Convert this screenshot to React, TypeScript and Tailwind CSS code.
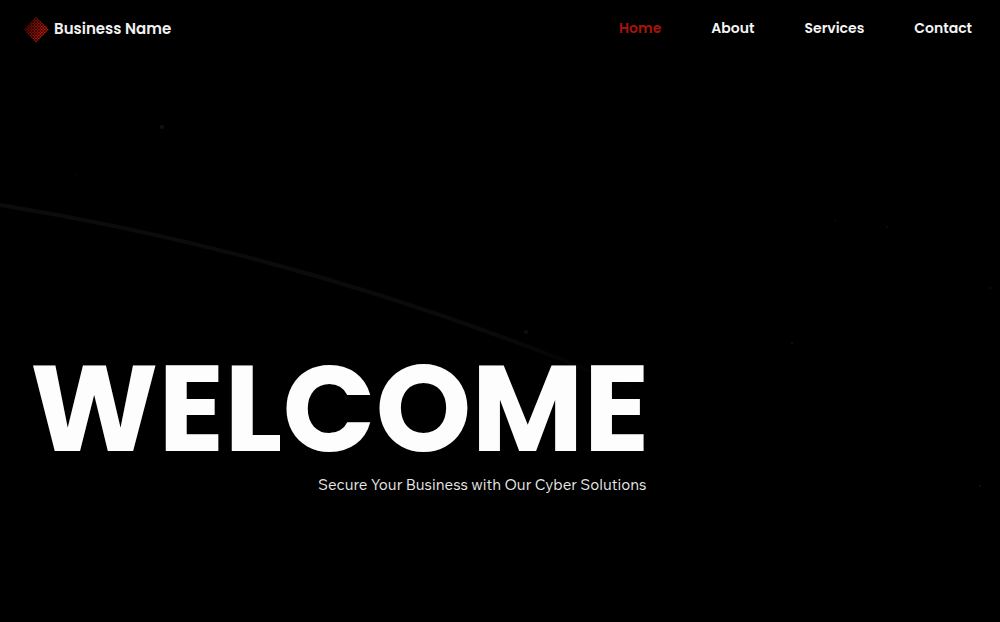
const links = ["Home", "About", "Services", "Contact"];

const stars = [
  { x: 162, y: 127, r: 2, o: 0.08 },
  { x: 526, y: 332, r: 2, o: 0.06 },
  { x: 76, y: 174, r: 1, o: 0.04 },
  { x: 835, y: 221, r: 1, o: 0.05 },
  { x: 887, y: 227, r: 1, o: 0.06 },
  { x: 990, y: 288, r: 1, o: 0.07 },
  { x: 792, y: 343, r: 1, o: 0.07 },
  { x: 980, y: 486, r: 1, o: 0.07 },
];

function LogoMark() {
  const dots = [];
  for (let row = 0; row < 9; row++) {
    for (let col = 0; col < 9; col++) {
      const x = 14 + (col - row) * 1.45;
      const y = 13.5 + (col + row - 8) * 1.5;
      const strength = Math.min(1, Math.max(0, (x + y * 0.4 - 6) / 20));
      dots.push(
        <circle
          key={`${row}-${col}`}
          cx={x}
          cy={y}
          r={0.55 + strength * 0.3}
          fill="#e0200c"
          opacity={0.25 + strength * 0.65}
        />
      );
    }
  }
  return (
    <svg viewBox="0 0 28 28" className="size-7" aria-hidden="true">
      <path d="M14 1.5 26 13.5 14 25.5 2 13.5Z" fill="#5a0a04" opacity="0.5" />
      {dots}
    </svg>
  );
}

function Backdrop() {
  return (
    <svg
      viewBox="0 0 1000 622"
      preserveAspectRatio="xMidYMid slice"
      className="pointer-events-none absolute inset-0 size-full"
      aria-hidden="true"
    >
      <defs>
        <linearGradient id="trail" x1="0" x2="1" y1="0" y2="0">
          <stop offset="0" stopColor="#0d0b0b" />
          <stop offset="0.75" stopColor="#0c0909" />
          <stop offset="0.9" stopColor="#030303" />
          <stop offset="1" stopColor="#000000" />
        </linearGradient>
      </defs>
      <path d="M0 205Q290 252 568 362L660 400" fill="none" stroke="url(#trail)" strokeWidth="4" />
      {stars.map((s) => (
        <circle key={`${s.x}-${s.y}`} cx={s.x} cy={s.y} r={s.r} fill="#ffffff" opacity={s.o} />
      ))}
    </svg>
  );
}

export default function App() {
  return (
    <div className="relative flex min-h-screen flex-col bg-black font-['Poppins','Inter',sans-serif] text-white">
      <Backdrop />
      <header className="relative flex items-start justify-between pt-4 pr-7 pl-[22px]">
        <a href="#home" className="flex items-start gap-1 text-[15px] font-semibold leading-[26px] text-[#f0f0f0]">
          <LogoMark />
          Business Name
        </a>
        <nav aria-label="Main">
          <ul className="flex gap-[50px] text-sm font-semibold leading-6 text-[#f4f4f4]">
            {links.map((label) => (
              <li key={label}>
                <a
                  href={`#${label.toLowerCase()}`}
                  aria-current={label === "Home" ? "page" : undefined}
                  className="aria-[current=page]:text-[#a8140b]"
                >
                  {label}
                </a>
              </li>
            ))}
          </ul>
        </nav>
      </header>
      <main className="relative flex grow flex-col items-start justify-end px-[30px] pb-[125px]">
        <div className="flex flex-col items-end gap-1">
          <h1 className="text-[122px] font-bold leading-[120px] text-[#fdfdfd]">WELCOME</h1>
          <p className="pr-[3px] font-['Wix_Madefor_Text','Figtree','Open_Sans',sans-serif] text-[15px] leading-6 text-[#e8e8e8]">
            Secure Your Business with Our Cyber Solutions
          </p>
        </div>
      </main>
    </div>
  );
}
